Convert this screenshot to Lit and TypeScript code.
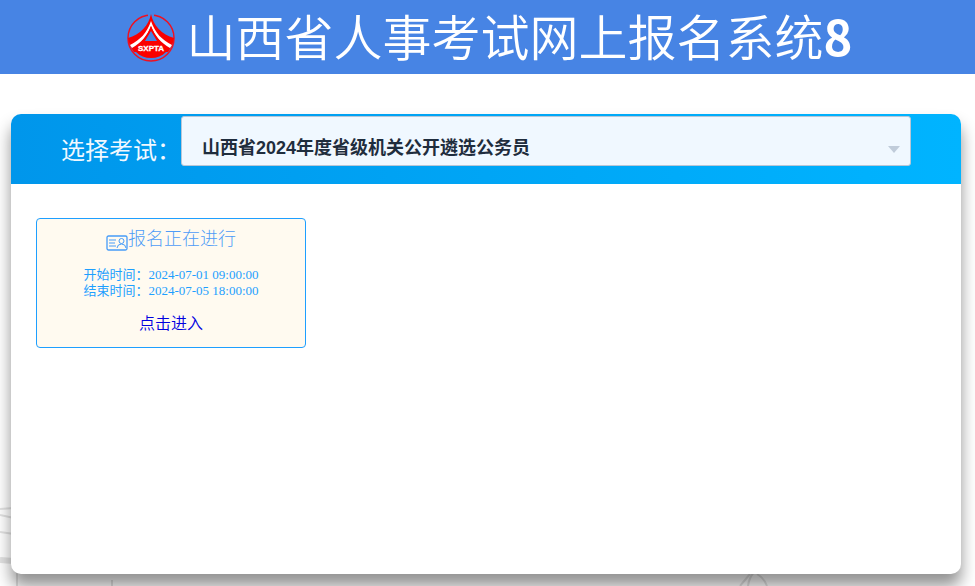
import { LitElement, html, css } from "lit";
import { customElement, state } from "lit/decorators.js";

@customElement("app-root")
export class AppRoot extends LitElement {
  @state() private exams = ["山西省2024年度省级机关公开遴选公务员"];
  @state() private stages = [
    { title: "报名正在进行", start: "2024-07-01 09:00:00", end: "2024-07-05 18:00:00" },
  ];

  static styles = css`
    :host {
      display: flex;
      flex-direction: column;
      min-height: 100vh;
      box-sizing: border-box;
      position: relative;
      overflow: hidden;
      background: #fff;
      font-family: "Liberation Serif", "Noto Sans CJK SC", serif;
    }
    .banner {
      height: 74px;
      box-sizing: border-box;
      padding-left: 4px;
      display: flex;
      align-items: center;
      justify-content: center;
      gap: 12px;
      background: #4784e4;
      color: #fff;
    }
    .logo { width: 48px; height: 48px; overflow: visible; }
    .logo text { font: 900 8px "Liberation Sans", sans-serif; fill: #fff; stroke: #fff; stroke-width: 0.3px; }
    h1 {
      margin: 0;
      padding-bottom: 4px;
      font: 350 49px/70px "Noto Sans CJK SC", sans-serif;
      white-space: nowrap;
    }
    .number { font-weight: 700; }
    .scene {
      position: absolute;
      left: 0;
      bottom: 0;
      width: 100%;
      height: 86px;
      fill: none;
      stroke: #e2e2e2;
      stroke-width: 2;
    }
    .panel {
      position: relative;
      flex: 1;
      margin: 40px 14px 12px 11px;
      border-radius: 10px;
      background: #fff;
      box-shadow: 0 12px 16px rgba(0, 0, 0, 0.43);
    }
    .picker {
      height: 70px;
      box-sizing: border-box;
      padding: 2px 50px 0;
      display: flex;
      align-items: flex-start;
      border-radius: 10px 10px 0 0;
      background: linear-gradient(to right, #0096eb, #00b4ff);
    }
    .picker label {
      font: 24px/66px "Noto Sans CJK SC", sans-serif;
      color: #f0f8ff;
      white-space: nowrap;
    }
    .field { position: relative; flex: 1; height: 50px; }
    select {
      appearance: none;
      width: 100%;
      height: 50px;
      box-sizing: border-box;
      margin: 0;
      padding: 14px 40px 0 20px;
      border: 1px solid #b8c6d6;
      border-radius: 3px;
      background: #f0f8ff;
      color: #1f2d3d;
      font: 700 18px "Liberation Sans", "Noto Sans CJK SC", sans-serif;
    }
    .caret {
      position: absolute;
      right: 11px;
      top: 30px;
      width: 12px;
      height: 7px;
      fill: #c0ccda;
      pointer-events: none;
    }
    .stages { display: flex; flex-wrap: wrap; gap: 24px; padding: 34px 25px; }
    .stage {
      width: 270px;
      height: 130px;
      box-sizing: border-box;
      border: 1px solid #1e9fff;
      border-radius: 4px;
      background: #fffaf0;
      color: #1e9fff;
      text-align: center;
    }
    h2 {
      margin: 0 0 12px;
      display: flex;
      justify-content: center;
      align-items: center;
      font: 300 18px/36px "Noto Sans CJK SC", sans-serif;
      color: #4e9cf7;
    }
    .badge { width: 22px; height: 16px; margin-top: 12px; fill: none; stroke: #479cf8; }
    .time { margin: 0; font-size: 13px; line-height: 16px; }
    .enter {
      display: inline-block;
      margin-top: 9px;
      font: 350 16px/28px "Noto Sans CJK SC", sans-serif;
      color: #0000e0;
      text-decoration: none;
    }
  `;

  render() {
    return html`
      <header class="banner">
        <svg class="logo" viewBox="0 0 48 48" aria-hidden="true">
          <circle cx="24" cy="25" r="23" fill="none" stroke="#f01020" stroke-width="1.5"></circle>
          <path d="M21 0H27V3H21Z" fill="#4784e4"></path>
          <path d="M24 1C22 12 13 22 1 25C2 31 4 35 7 39H41C44 35 46 31 47 25C35 22 26 12 24 1Z" fill="#fa0000"></path>
          <path d="M24 8C20 20 13 27 3 32L5 35C14 30 20 23 24 13C28 23 34 30 43 35L45 32C35 27 28 20 24 8Z" fill="#fff"></path>
          <path d="M24 13C22 19 19 24 15 28V31H33V28C29 24 26 19 24 13Z" fill="#fa0000"></path>
          <path d="M24 18L30 28H18Z" fill="#4784e4"></path>
          <path d="M9 39H39C35 43 30 45 24 45S13 43 9 39Z" fill="#fa0000"></path>
          <text x="24" y="38" text-anchor="middle">SXPTA</text>
        </svg>
        <h1>山西省人事考试网上报名系统<span class="number">8</span></h1>
      </header>
      <svg class="scene" aria-hidden="true">
        <path d="M0 9L14 8M0 15L14 18M0 32L14 34M17 70V86M112 80V86M740 86L750 74M748 86Q749 78 754 72M767 86Q764 78 757 74"></path>
        <path d="M0 60L14 61" stroke-width="6"></path>
      </svg>
      <main class="panel">
        <div class="picker">
          <label for="exam">选择考试：</label>
          <div class="field">
            <select id="exam">
              ${this.exams.map((e) => html`<option>${e}</option>`)}
            </select>
            <svg class="caret" viewBox="0 0 12 7" aria-hidden="true"><path d="M0 0H12L6 7Z"></path></svg>
          </div>
        </div>
        <div class="stages">
          ${this.stages.map(
            (s) => html`
              <section class="stage">
                <h2>
                  <svg class="badge" viewBox="0 0 22 16" aria-hidden="true">
                    <rect x="1" y="1" width="20" height="14" rx="1.5" stroke-width="1.3"></rect>
                    <path d="M3 5H10M3 8H9M3 11H10M11 13Q11.5 9 15.5 9T20 13"></path>
                    <circle cx="15.5" cy="6" r="2.5"></circle>
                  </svg>
                  <span>${s.title}</span>
                </h2>
                <p class="time">开始时间：${s.start}</p>
                <p class="time">结束时间：${s.end}</p>
                <a class="enter" href="#enter">点击进入</a>
              </section>
            `
          )}
        </div>
      </main>
    `;
  }
}
